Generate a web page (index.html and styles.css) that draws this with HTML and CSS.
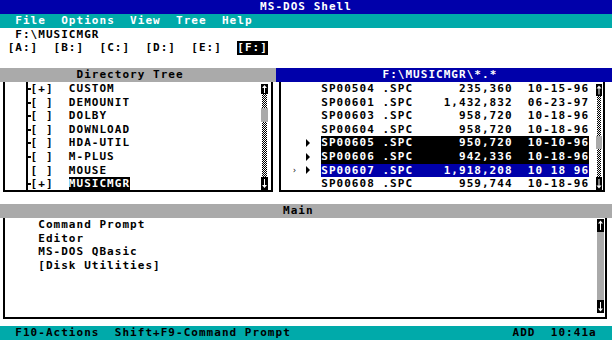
FILE: index.html
```html
<!DOCTYPE html>
<html>
<head>
<meta charset="utf-8">
<title>MS-DOS Shell</title>
<link rel="stylesheet" href="styles.css">
</head>
<body>
<div class="screen">
  <div class="title">MS-DOS Shell</div>
  <div class="menu">  File  Options  View  Tree  Help</div>
  <div class="path">  F:\MUSICMGR</div>
  <div class="drives"> [A:]  [B:]  [C:]  [D:]  [E:]  <span class="inv">[F:]</span></div>
  <div class="spacer"></div>

  <div class="panes">
    <section class="pane pane-tree">
      <div class="head head-gray head-tree">Directory Tree</div>
      <div class="body body-tree">
        <div class="tree">
          <div class="trow"><span class="twig"></span><span class="tt">[+]  CUSTOM</span></div>
          <div class="trow"><span class="twig"></span><span class="tt">[ ]  DEMOUNIT</span></div>
          <div class="trow"><span class="twig"></span><span class="tt">[ ]  DOLBY</span></div>
          <div class="trow"><span class="twig"></span><span class="tt">[ ]  DOWNLOAD</span></div>
          <div class="trow"><span class="twig"></span><span class="tt">[ ]  HDA-UTIL</span></div>
          <div class="trow"><span class="twig"></span><span class="tt">[ ]  M-PLUS</span></div>
          <div class="trow"><span class="twig no-arm"></span><span class="tt">[ ]  MOUSE</span></div>
          <div class="trow"><span class="twig"></span><span class="tt">[+]  <span class="inv">MUSICMGR</span></span></div>
        </div>
        <div class="sb sb-tree">
          <div class="sb-arrow a-up-s"><svg viewBox="0 0 7 10" width="7" height="10"><path d="M3.5 1 L1 4 H3 V9 H4 V4 H6 Z" fill="#fff"/></svg></div>
          <div class="dither d-tree-top"></div>
          <div class="thumb"></div>
          <div class="dither d-grow"></div>
          <div class="sb-arrow a-down"><svg viewBox="0 0 7 13" width="7" height="13"><path d="M3.5 11 L1 8 H3 V2 H4 V8 H6 Z" fill="#fff"/></svg></div>
        </div>
      </div>
    </section>

    <section class="pane pane-files">
      <div class="head head-blue">F:\MUSICMGR\*.*</div>
      <div class="body body-files">
        <div class="files">
          <div class="frow"><span class="mk"></span><span class="cell"></span><span class="cell"></span><span class="cell"></span><span class="ft">SP00504 .SPC      235,360  10-15-96</span></div>
          <div class="frow"><span class="mk"></span><span class="cell"></span><span class="cell"></span><span class="cell"></span><span class="ft">SP00601 .SPC    1,432,832  06-23-97</span></div>
          <div class="frow"><span class="mk"></span><span class="cell"></span><span class="cell"></span><span class="cell"></span><span class="ft">SP00603 .SPC      958,720  10-18-96</span></div>
          <div class="frow"><span class="mk"></span><span class="cell"></span><span class="cell"></span><span class="cell"></span><span class="ft">SP00604 .SPC      958,720  10-18-96</span></div>
          <div class="frow"><span class="mk"></span><span class="cell"></span><span class="cell"><i class="tri"></i></span><span class="cell"></span><span class="ft inv">SP00605 .SPC      950,720  10-10-96</span></div>
          <div class="frow"><span class="mk"></span><span class="cell"></span><span class="cell"><i class="tri"></i></span><span class="cell"></span><span class="ft inv">SP00606 .SPC      942,336  10-18-96</span></div>
          <div class="frow"><span class="mk">›</span><span class="cell"></span><span class="cell"><i class="tri"></i></span><span class="cell"></span><span class="ft cur">SP00607 .SPC    1,918,208  10 18 96</span></div>
          <div class="frow"><span class="mk"></span><span class="cell"></span><span class="cell"></span><span class="cell"></span><span class="ft">SP00608 .SPC      959,744  10-18-96</span></div>
        </div>
        <div class="sb sb-files">
          <div class="sb-arrow a-up"><svg viewBox="0 0 6 12" width="6" height="12"><path d="M3 1.5 L0.5 4.5 H2.5 V10.5 H3.5 V4.5 H5.5 Z" fill="#fff"/></svg></div>
          <div class="dither d-files-top"></div>
          <div class="thumb"></div>
          <div class="dither d-grow"></div>
          <div class="sb-arrow a-down"><svg viewBox="0 0 6 13" width="6" height="13"><path d="M3 11.5 L0.5 8.5 H2.5 V2 H3.5 V8.5 H5.5 Z" fill="#fff"/></svg></div>
        </div>
      </div>
    </section>
  </div>

  <div class="gap-mid"></div>

  <section class="main-pane">
    <div class="head head-gray head-main">Main</div>
    <div class="body body-main">
      <div class="main-list">
        <div class="mrow">Command Prompt</div>
        <div class="mrow">Editor</div>
        <div class="mrow">MS-DOS QBasic</div>
        <div class="mrow">[Disk Utilities]</div>
      </div>
      <div class="sb sb-main">
        <div class="sb-arrow a-up"><svg viewBox="0 0 7 13" width="7" height="13"><path d="M3.5 1.5 L1 4.5 H3 V11 H4 V4.5 H6 Z" fill="#fff"/></svg></div>
        <div class="track"></div>
        <div class="sb-arrow a-down"><svg viewBox="0 0 7 13" width="7" height="13"><path d="M3.5 11.5 L1 8.5 H3 V2 H4 V8.5 H6 Z" fill="#fff"/></svg></div>
      </div>
    </div>
  </section>

  <div class="gap-bottom"></div>

  <div class="status">
    <span class="st-left">F10-Actions  Shift+F9-Command Prompt</span>
    <span class="st-right">ADD  10:41a</span>
  </div>
</div>
</body>
</html>
```

FILE: styles.css
```css
:root {
  --c: 7.65px;
  --blue: #0000aa;
  --teal: #00aaaa;
  --gray: #aaaaaa;
}

* {
  box-sizing: border-box;
  margin: 0;
  padding: 0;
}

html, body {
  width: 612px;
  height: 340px;
  overflow: hidden;
  background: #fff;
}

body {
  font-family: "DejaVu Sans Mono", "Liberation Mono", monospace;
  font-weight: bold;
  font-size: 11px;
  letter-spacing: 1.03px;
  line-height: 13.6px;
  color: #000;
}

.screen {
  width: 612px;
  height: 340px;
  display: flex;
  flex-direction: column;
}

.title {
  height: 14px;
  line-height: 14px;
  background: var(--blue);
  color: #fff;
  text-align: center;
}

.menu {
  height: 14px;
  line-height: 14px;
  background: var(--teal);
  color: #fff;
  white-space: pre;
}

.path {
  height: 13px;
  line-height: 13px;
  white-space: pre;
}

.drives {
  height: 14px;
  line-height: 14px;
  white-space: pre;
}

.inv {
  background: #000;
  color: #fff;
}

.drives .inv,
.trow .inv {
  display: inline-block;
}

.spacer {
  height: 13px;
}

/* ---------- upper panes ---------- */
.panes {
  display: flex;
  height: 124px;
}

.pane-tree {
  width: 276px;
  display: flex;
  flex-direction: column;
}

.pane-files {
  flex: 1;
  display: flex;
  flex-direction: column;
}

.head {
  height: 14px;
  line-height: 14px;
  white-space: pre;
}

.head-gray {
  background: var(--gray);
  color: #000;
}

.head-blue {
  background: var(--blue);
  color: #fff;
  padding-left: 106.5px;
}

.head-tree {
  padding-left: calc(var(--c) * 10);
}

.body {
  display: flex;
  border: 2px solid #000;
  border-top: 0;
}

.body-tree {
  height: 110px;
  margin: 0 3px 0 3px;
}

.body-files {
  height: 110px;
  margin: 0 7px 0 3px;
}

/* tree */
.tree {
  flex: 1;
  padding-left: 17.95px;
}

.trow {
  display: flex;
  height: 13.6px;
  white-space: pre;
}

.twig {
  width: var(--c);
  flex: none;
  background:
    linear-gradient(#000, #000) 3px 0 / 2px 100% no-repeat,
    linear-gradient(#000, #000) 4px 6px / 6px 2px no-repeat;
}

.twig.no-arm {
  background: linear-gradient(#000, #000) 3px 0 / 2px 100% no-repeat;
}

/* file list */
.files {
  flex: 1;
  padding-left: 9.7px;
}

.frow {
  display: flex;
  height: 13.6px;
  white-space: pre;
}

.mk,
.cell {
  width: var(--c);
  flex: none;
  display: flex;
  align-items: center;
}

.mk {
  font-size: 8px;
  letter-spacing: 0;
  justify-content: center;
  font-weight: normal;
}

.tri {
  display: block;
  width: 0;
  height: 0;
  border-left: 4px solid #000;
  border-top: 4px solid transparent;
  border-bottom: 4px solid transparent;
}

.ft {
  width: calc(var(--c) * 35);
  flex: none;
}

.cur {
  background: var(--blue);
  color: #fff;
}

/* scrollbars */
.sb {
  display: flex;
  flex-direction: column;
  flex: none;
}

.sb-tree {
  width: 7px;
  margin: 2px 3px 0 0;
  height: 106px;
}

.sb-files {
  width: 6px;
  margin: 2px 1px 0 0;
  height: 106px;
}

.sb-main {
  width: 7px;
  margin: 1px 1px 0 0;
  height: 94px;
}

.sb-arrow {
  background: #000;
  display: flex;
  align-items: center;
  justify-content: center;
  flex: none;
}

.sb-arrow svg {
  display: block;
}

.a-up-s { height: 10px; }
.a-up { height: 12px; }
.a-down { height: 13px; }

.sb-main .a-up { height: 13px; }

.dither {
  flex: none;
  padding: 0 1px;
  background: repeating-conic-gradient(#000 0% 25%, #fff 0% 50%) 0 0 / 2px 2px content-box;
}

.d-grow {
  flex: 1;
}

.d-tree-top { height: 14px; }
.d-files-top { height: 40px; }

.thumb {
  flex: none;
  height: 14px;
  background: var(--gray);
}

.sb-files .thumb {
  height: 13px;
}

.track {
  flex: 1;
  background: var(--gray);
}

/* main pane */
.gap-mid {
  height: 12px;
}

.main-pane {
  display: flex;
  flex-direction: column;
}

.head-main {
  padding-left: calc(var(--c) * 37);
}

.body-main {
  height: 101px;
  margin: 0 5px 0 3px;
}

.main-list {
  flex: 1;
  padding-left: 33.25px;
}

.mrow {
  height: 13.6px;
  white-space: pre;
}

.gap-bottom {
  height: 7px;
}

.status {
  height: 14px;
  line-height: 14px;
  background: var(--teal);
  color: #000;
  display: flex;
  white-space: pre;
  padding: 0 calc(var(--c) * 2);
}

.st-right {
  margin-left: auto;
}
```
